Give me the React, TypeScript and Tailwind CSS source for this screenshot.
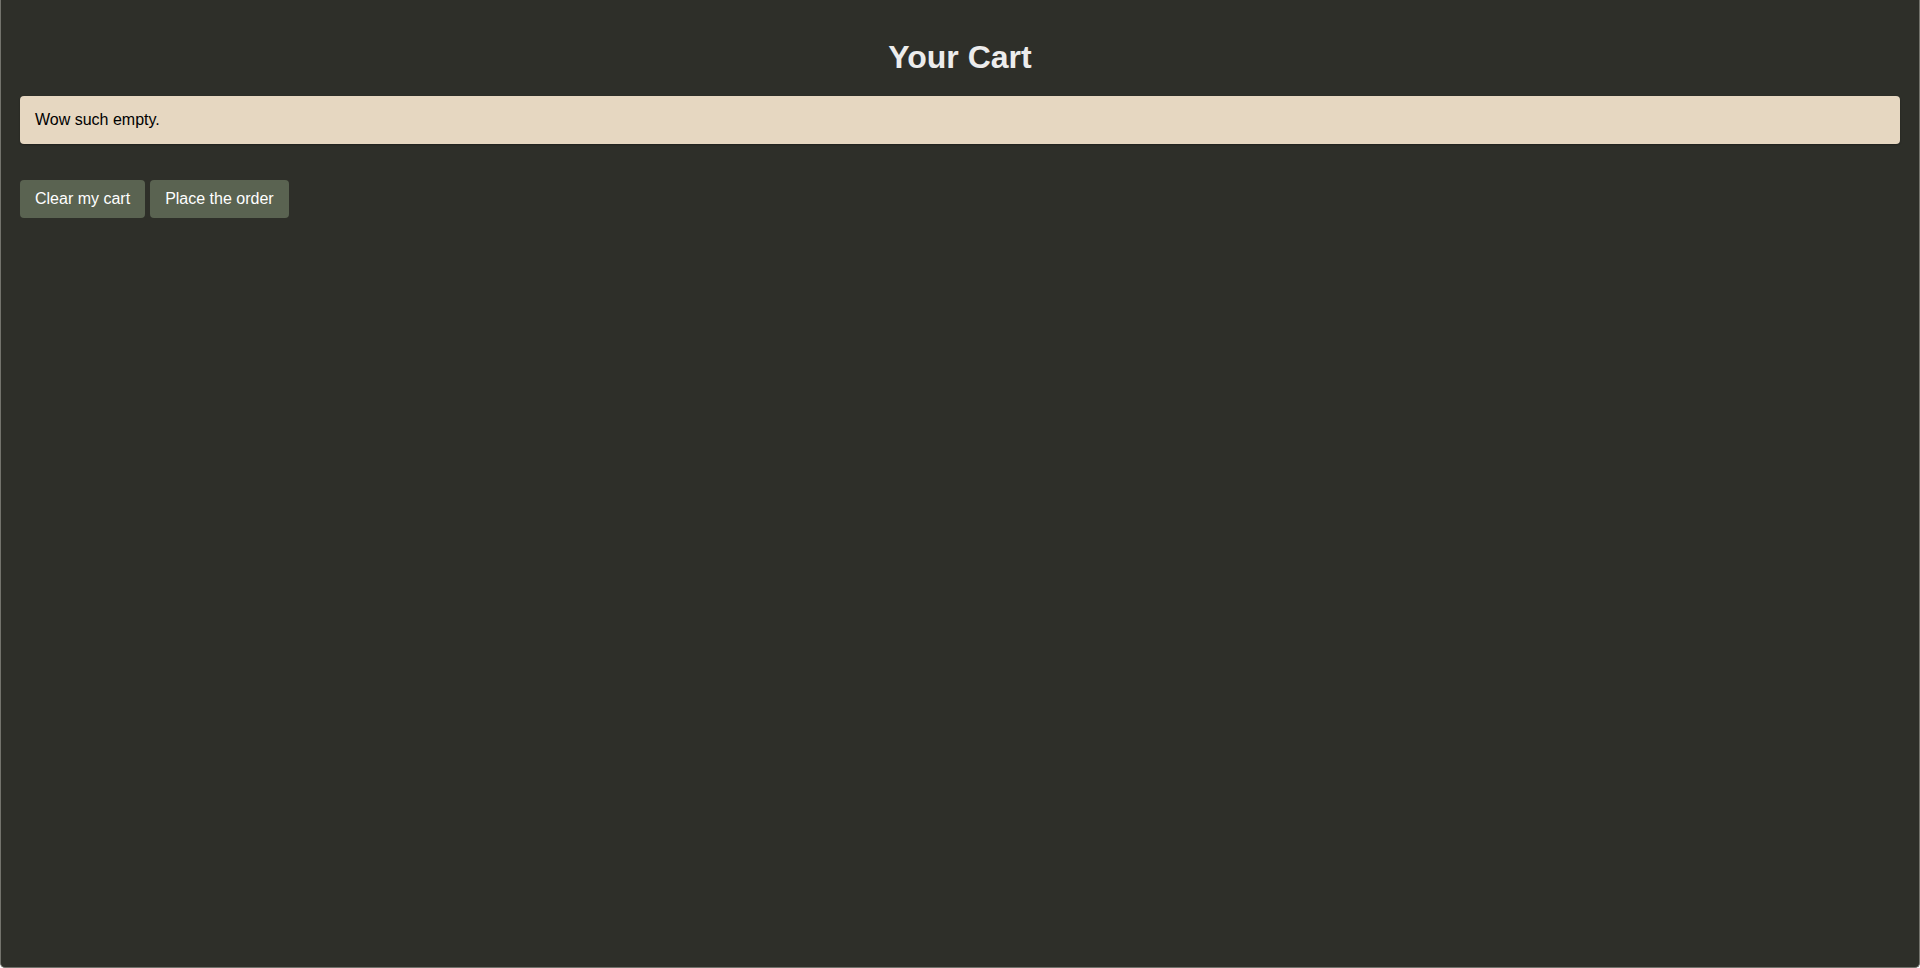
export default function App() {
  return (
    <div
      className="h-[968px] bg-[#2e2f29] border border-t-0 border-[#73736c] rounded-b-[5px] px-[19px] pt-[17px] text-[16px]"
      style={{ fontFamily: '"Liberation Sans", Arial, sans-serif' }}
    >
      <h1 className="text-[32px] font-bold text-center text-[#ececec] leading-[37px] mt-[22px]">Your Cart</h1>
      <div className="mt-[20px] h-[48px] bg-[#e6d7c1] rounded-[4px] px-[15px] flex items-center text-black shadow-[0_1px_2px_rgba(0,0,0,0.3)]">
        Wow such empty.
      </div>
      <div className="mt-[36px] flex gap-[5px]">
        <button className="h-[38px] px-[15px] rounded-[4px] bg-[#5a6351] text-white leading-6">Clear my cart</button>
        <button className="h-[38px] px-[15px] rounded-[4px] bg-[#5a6351] text-white leading-6">Place the order</button>
      </div>
    </div>
  );
}
